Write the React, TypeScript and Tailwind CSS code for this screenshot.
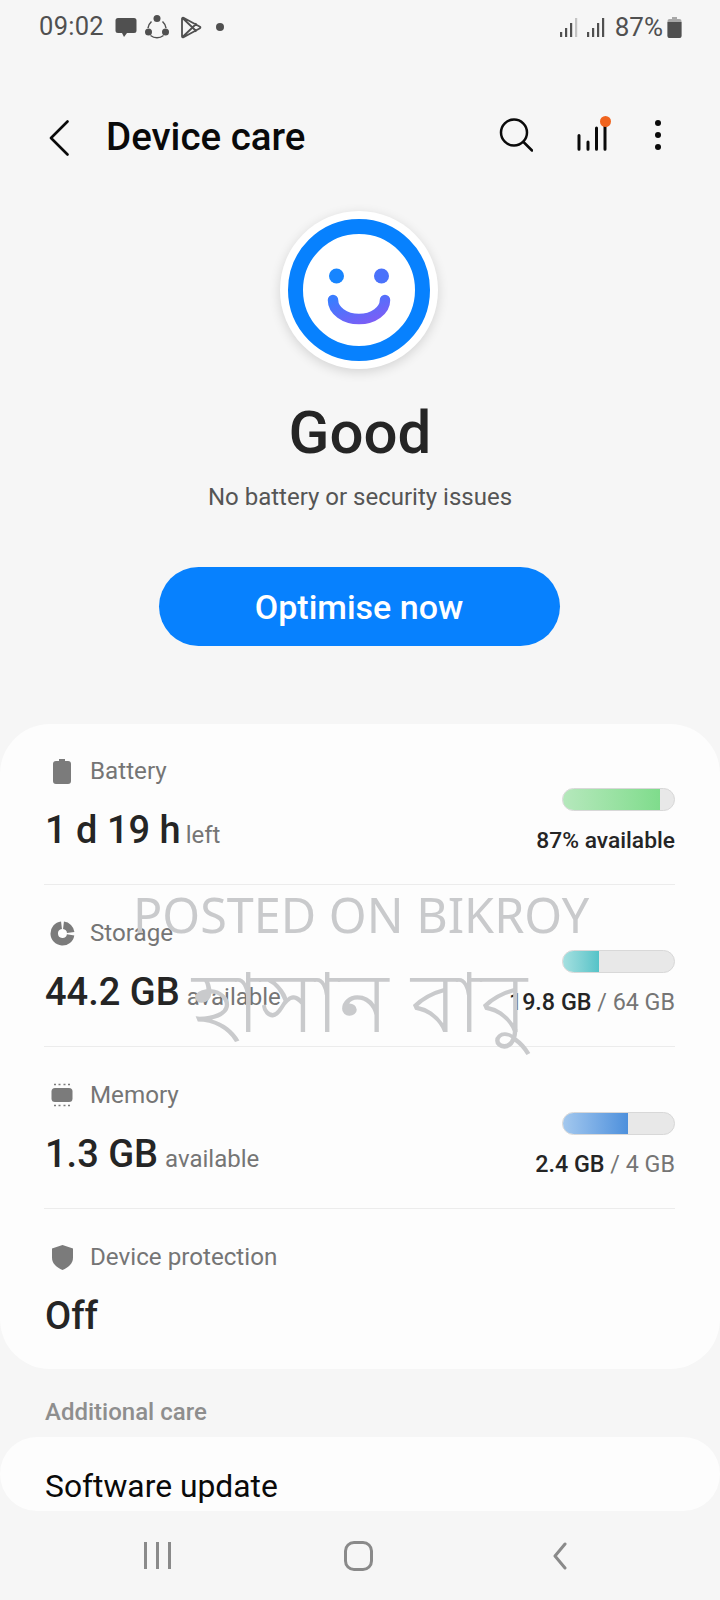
import { ReactNode } from 'react';

const font = { fontFamily: 'Roboto, "Noto Sans", sans-serif' };

function StatusBar() {
  return (
    <div className="h-[54px] pl-[39px] pr-[38px] flex items-center justify-between text-[#505050]">
      <div className="flex items-center">
        <span className="text-[25.5px] leading-none tracking-[0.3px]">09:02</span>
        <svg width="22" height="21" viewBox="0 0 22 21" className="ml-[11px]">
          <path d="M3 1h16a2.500 2.500 0 0 1 2.500 2.500v10A2.500 2.500 0 0 1 19 16h-7l-3 4-2-4H3a2.500 2.500 0 0 1-2.500-2.500v-10A2.500 2.500 0 0 1 3 1z" fill="#505050" />
        </svg>
        <svg width="26" height="26" viewBox="0 0 26 26" className="ml-[7px]">
          <path d="M7.500 7.500A11 11 0 0 0 4 14M18.500 7.500A11 11 0 0 1 22 14M6.500 21.500a11 11 0 0 0 13 0" fill="none" stroke="#505050" strokeWidth="1.500" />
          <circle cx="13" cy="4.500" r="3.500" fill="#505050" />
          <circle cx="4.500" cy="18" r="3.500" fill="#505050" />
          <circle cx="21.500" cy="18" r="3.500" fill="#505050" />
        </svg>
        <svg width="22" height="23" viewBox="0 0 22 23" className="ml-[10px]">
          <path d="M2 2.500v18a1 1 0 0 0 1.500.8L20 12.200a.8.8 0 0 0 0-1.400L3.500 1.700A1 1 0 0 0 2 2.500zM2.500 2l10 9.500-10 9.500M12.500 11.500l4-4M12.500 11.500l4 4" fill="none" stroke="#505050" strokeWidth="1.800" strokeLinejoin="round" />
        </svg>
        <span className="ml-[14px] w-2 h-2 rounded-full bg-[#505050]" />
      </div>
      <div className="flex items-center">
        <SignalIcon dim />
        <SignalIcon className="ml-[9px]" />
        <span className="ml-[10px] text-[26px] leading-none">87%</span>
        <svg width="15" height="21" viewBox="0 0 15 21" className="ml-[4px]">
          <path d="M5 0h5v2H5z" fill="#a8a8a8" />
          <path d="M2.500 2h10A2 2 0 0 1 14.500 4v15a2 2 0 0 1-2 2h-10a2 2 0 0 1-2-2V4a2 2 0 0 1 2-2z" fill="#a8a8a8" />
          <path d="M.5 5h14v14a2 2 0 0 1-2 2h-10a2 2 0 0 1-2-2z" fill="#505050" />
        </svg>
      </div>
    </div>
  );
}

function SignalIcon({ dim, className }: { dim?: boolean; className?: string }) {
  return (
    <svg width="18" height="19" viewBox="0 0 18 19" className={className}>
      <rect x="0" y="14" width="2.200" height="5" fill="#505050" />
      <rect x="5" y="10" width="2.200" height="9" fill="#505050" />
      <rect x="10" y="5" width="2.200" height="14" fill="#505050" />
      <rect x="15" y="0" width="2.200" height="19" fill={dim ? '#c4c4c4' : '#505050'} />
    </svg>
  );
}

function AppBar() {
  return (
    <div className="h-[83px] mt-[42px] flex items-center">
      <svg width="22" height="36" viewBox="0 0 22 36" className="ml-[48px]">
        <path d="M19.500 1.500 3 18l16.500 16.500" fill="none" stroke="#0a0a0a" strokeWidth="2.600" strokeLinecap="round" strokeLinejoin="round" />
      </svg>
      <h1 className="ml-[36px] text-[38.500px] leading-none font-medium text-[#0a0a0a]">Device care</h1>
      <div className="ml-auto flex items-center pr-[59px] pb-[5px]">
        <svg width="34" height="34" viewBox="0 0 34 34">
          <circle cx="15" cy="14.500" r="13" fill="none" stroke="#0a0a0a" strokeWidth="2.500" />
          <path d="M24.500 24 33 32.500" stroke="#0a0a0a" strokeWidth="2.500" strokeLinecap="round" />
        </svg>
        <div className="relative ml-[44px] w-[30px] h-[36px]">
          <svg width="30" height="36" viewBox="0 0 30 36">
            <path d="M2 18.500v13.700M11 25v7.200M19.500 11v21.200M28 6v26.200" stroke="#0a0a0a" strokeWidth="3" strokeLinecap="round" />
          </svg>
          <span className="absolute -right-[4px] -top-[1px] w-[11px] h-[11px] rounded-full bg-[#f0641e]" />
        </div>
        <div className="ml-[48px] flex flex-col gap-[6px]">
          <span className="w-[6px] h-[6px] rounded-full bg-[#0a0a0a]" />
          <span className="w-[6px] h-[6px] rounded-full bg-[#0a0a0a]" />
          <span className="w-[6px] h-[6px] rounded-full bg-[#0a0a0a]" />
        </div>
      </div>
    </div>
  );
}

function Face() {
  return (
    <div className="mx-auto mt-[32px] -translate-x-px w-[158px] h-[158px] rounded-full bg-white shadow-[0_3px_12px_rgba(0,0,0,0.14)] flex items-center justify-center">
      <div className="w-[142px] h-[142px] rounded-full border-[15px] border-[#0781fe] bg-white flex items-center justify-center">
        <svg width="72" height="72" viewBox="0 0 72 72">
          <defs>
            <linearGradient id="faceGrad" x1="0" y1="0" x2="1" y2="1">
              <stop offset="0" stopColor="#3a7cff" />
              <stop offset="1" stopColor="#7f5cf5" />
            </linearGradient>
          </defs>
          <circle cx="13.500" cy="22" r="7.500" fill="#1785ff" />
          <circle cx="58.500" cy="22" r="7.500" fill="#4a72fb" />
          <path d="M10 46A26 19 0 0 0 62 46" fill="none" stroke="url(#faceGrad)" strokeWidth="10.500" strokeLinecap="round" />
        </svg>
      </div>
    </div>
  );
}

function Row({ icon, label, value, unit, unitGap = 'ml-[7px]', right, fill, pct, last }: {
  icon: ReactNode;
  label: string;
  value: string;
  unit?: string;
  unitGap?: string;
  right?: ReactNode;
  fill?: string;
  pct?: number;
  last?: boolean;
}) {
  return (
    <div className={`ml-[44px] mr-[45px] h-[161px] mb-px ${last ? '' : 'border-b border-[#ececec]'} flex justify-between`}>
      <div className="pt-[31px]">
        <div className="flex items-center h-[32px]">
          <span className="w-[36px] flex justify-center">{icon}</span>
          <span className="ml-[10px] text-[24.200px] leading-none text-[#757575]">{label}</span>
        </div>
        <div className="mt-[21px] ml-px flex items-baseline">
          <span className="text-[38px] leading-[44px] font-medium text-[#252525]">{value}</span>
          {unit && <span className={`${unitGap} text-[24px] leading-none text-[#757575]`}>{unit}</span>}
        </div>
      </div>
      {right && (
        <div className="pt-[64px] flex flex-col items-end">
          <div className="w-[113px] h-[23px] rounded-full bg-[#e8e8e8] border border-[#d8d8d8] overflow-hidden">
            <div className={`h-full ${fill}`} style={{ width: `${pct}%` }} />
          </div>
          <div className="mt-[15px] text-[23.300px] leading-[28px] text-[#757575] whitespace-nowrap">{right}</div>
        </div>
      )}
    </div>
  );
}

const Strong = ({ children }: { children: ReactNode }) => (
  <span className="font-medium text-[#252525]">{children}</span>
);

export default function App() {
  return (
    <div style={font} className="relative w-[720px] h-[1600px] overflow-hidden bg-[#f6f6f6] flex flex-col">
      <StatusBar />
      <AppBar />
      <Face />
      <div className="mt-[30px] text-center text-[60px] leading-[68px] font-medium text-[#252525]">Good</div>
      <div className="mt-[15px] text-center text-[24px] leading-[30px] text-[#555555]">No battery or security issues</div>
      <button className="mx-auto mt-[55px] -translate-x-px w-[401px] h-[79px] pt-px rounded-full bg-[#0781fe] text-white text-[34px] font-medium">
        Optimise now
      </button>

      <div className="mt-[78px] h-[645px] rounded-[50px] bg-[#fdfdfd]">
        <Row
          icon={
            <svg width="18" height="25" viewBox="0 0 18 25">
              <path d="M6 0h6v2H6zM3 2h12a3 3 0 0 1 3 3v17a3 3 0 0 1-3 3H3a3 3 0 0 1-3-3V5a3 3 0 0 1 3-3z" fill="#7b7b7b" />
            </svg>
          }
          label="Battery"
          value="1 d 19 h"
          unit="left"
          unitGap="ml-[5px]"
          fill="bg-gradient-to-r from-[#b5e8bc] to-[#7fdc8c]"
          pct={87}
          right={<span className="text-[22.800px]"><Strong>87% available</Strong></span>}
        />
        <Row
          icon={
            <svg width="25" height="25" viewBox="0 0 25 25">
              <path d="M13.500 4.300A8.250 8.250 0 0 1 20.700 11.500" fill="none" stroke="#7b7b7b" strokeWidth="7.500" />
              <path d="M20.600 13.800A8.250 8.250 0 1 1 11.500 4.300" fill="none" stroke="#7b7b7b" strokeWidth="7.500" />
            </svg>
          }
          label="Storage"
          value="44.2 GB"
          unit="available"
          fill="bg-gradient-to-r from-[#a4e0e0] to-[#54c3c8]"
          pct={32}
          right={<><Strong>19.8 GB</Strong> / 64 GB</>}
        />
        <Row
          icon={
            <svg width="23" height="24" viewBox="0 0 23 24">
              <rect x="0.500" y="5" width="21" height="14" rx="3.500" fill="#7b7b7b" />
              <path d="M3 1.500h2M7.500 1.500h2M12.500 1.500h2M17 1.500h2M3 22.500h2M7.500 22.500h2M12.500 22.500h2M17 22.500h2" stroke="#7b7b7b" strokeWidth="1.500" />
            </svg>
          }
          label="Memory"
          value="1.3 GB"
          unit="available"
          fill="bg-gradient-to-r from-[#a3c8ee] to-[#4d90dc]"
          pct={59}
          right={<><Strong>2.4 GB</Strong> / 4 GB</>}
        />
        <Row
          icon={
            <svg width="21" height="25" viewBox="0 0 21 25">
              <path d="M10.500 0 21 3.500v9c0 6-4.500 10-10.500 12.500C4.500 22.500 0 18.500 0 12.500v-9z" fill="#7b7b7b" />
            </svg>
          }
          label="Device protection"
          value="Off"
          last
        />
      </div>

      <div className="mt-[29px] pl-[45px] text-[24px] leading-[28px] font-medium text-[#8e8e8e]">Additional care</div>
      <div className="mt-[11px] h-[74px] rounded-[40px] bg-[#fdfdfd] pl-[45px] pt-[31px] text-[31.800px] leading-[36px] text-[#0a0a0a] overflow-hidden">
        Software update
      </div>

      <div className="flex-1 flex items-center justify-between pl-[144px] pr-[153px]">
        <div className="flex gap-[9px]">
          <span className="w-[3px] h-[27px] bg-[#8a8a8a]" />
          <span className="w-[3px] h-[27px] bg-[#8a8a8a]" />
          <span className="w-[3px] h-[27px] bg-[#8a8a8a]" />
        </div>
        <span className="mr-[8px] w-[29px] h-[30px] rounded-[10px] border-[3px] border-[#8a8a8a]" />
        <svg width="14" height="28" viewBox="0 0 14 28">
          <path d="M12 2 2 14l10 12" fill="none" stroke="#8a8a8a" strokeWidth="3" strokeLinecap="round" strokeLinejoin="round" />
        </svg>
      </div>

      {/* watermark over the card */}
      <div className="absolute left-[133px] top-[881px] text-[48.500px] leading-[66px] text-[#c9cacc] whitespace-nowrap [font-family:'Noto_Sans',sans-serif]">
        POSTED ON BIKROY
      </div>
      <div className="absolute left-[192px] top-[945px] text-[83px] leading-[110px] text-[#c9cacc] whitespace-nowrap [font-family:'Noto_Sans',sans-serif]">
        হাসান বাবু
      </div>
    </div>
  );
}
